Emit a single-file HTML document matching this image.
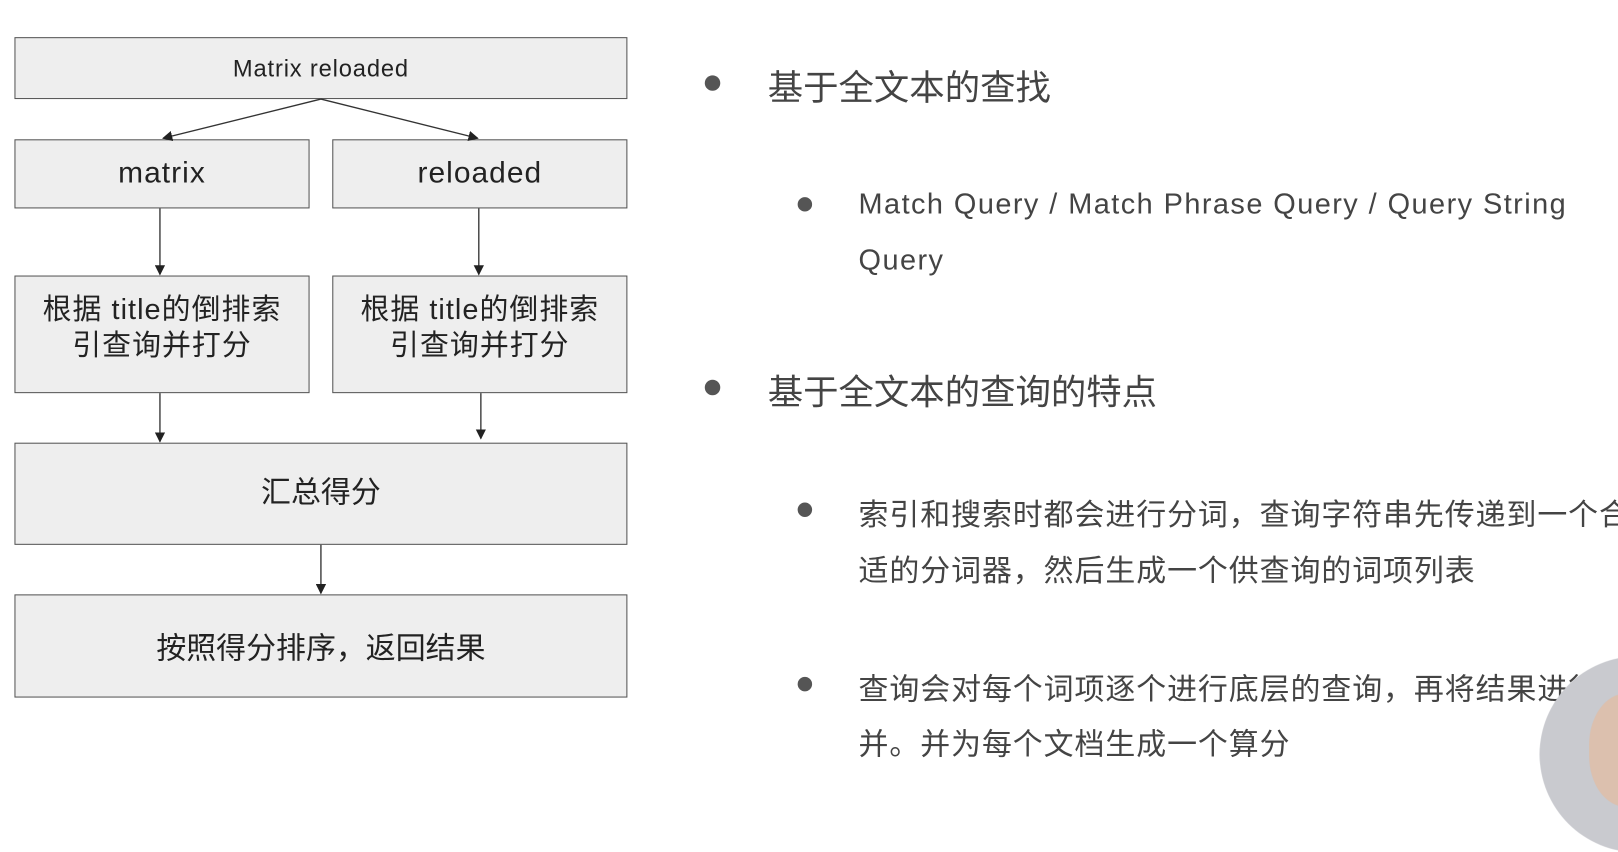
<!DOCTYPE html>
<html><head><meta charset="utf-8"><style>
body{margin:0;width:1618px;height:774px;background:#fff;position:relative;overflow:hidden;font-family:"Liberation Sans","Noto Sans CJK SC",sans-serif;color:#333}
#w{position:absolute;left:0;top:0;width:1568px;height:750px;transform:scale(1.0319);transform-origin:0 0}
.b{position:absolute;background:#eeeeee;border:1px solid #555;box-sizing:border-box;display:flex;align-items:center;justify-content:center;text-align:center;color:#222}
.t{position:absolute;white-space:nowrap;color:#444}
.d{position:absolute;border-radius:50%;background:#555}
</style></head><body><div id="w">
<div class="b" style="left:14px;top:36px;width:594px;height:60px;font-size:23px;letter-spacing:0.8px">Matrix reloaded</div>
<div class="b" style="left:14px;top:135px;width:286px;height:67px;font-size:29px;letter-spacing:1px">matrix</div>
<div class="b" style="left:322px;top:135px;width:286px;height:67px;font-size:29px;letter-spacing:1px">reloaded</div>
<div class="b" style="left:14px;top:267px;width:286px;height:114px;font-size:28px;line-height:35px;padding-bottom:14px;letter-spacing:1px">根据 title的倒排索<br>引查询并打分</div>
<div class="b" style="left:322px;top:267px;width:286px;height:114px;font-size:28px;line-height:35px;padding-bottom:14px;letter-spacing:1px">根据 title的倒排索<br>引查询并打分</div>
<div class="b" style="left:14px;top:429px;width:594px;height:99px;font-size:29px;padding-bottom:8px">汇总得分</div>
<div class="b" style="left:14px;top:576px;width:594px;height:100px;font-size:29px">按照得分排序，返回结果</div>
<svg style="position:absolute;left:0;top:0" width="620" height="700">
<defs><marker id="a" markerWidth="10" markerHeight="10" refX="9" refY="5" orient="auto" markerUnits="userSpaceOnUse"><path d="M0,0 L10,5 L0,10z" fill="#222"/></marker></defs>
<g stroke="#333" stroke-width="1.3" fill="none" marker-end="url(#a)">
<line x1="311" y1="96" x2="158" y2="134"/>
<line x1="311" y1="96" x2="463" y2="134"/>
<line x1="155" y1="202" x2="155" y2="266"/>
<line x1="464" y1="202" x2="464" y2="266"/>
<line x1="155" y1="381" x2="155" y2="428"/>
<line x1="466" y1="381" x2="466" y2="425"/>
<line x1="311" y1="528" x2="311" y2="575"/>
</g></svg>
<div class="d" style="left:683px;top:73px;width:15px;height:15px"></div>
<div class="t" style="left:744px;top:57px;font-size:34.3px">基于全文本的查找</div>
<div class="d" style="left:773px;top:191px;width:14px;height:14px"></div>
<div class="t" style="left:832px;top:182px;font-size:28px;letter-spacing:1.4px">Match Query / Match Phrase Query / Query String</div>
<div class="t" style="left:832px;top:236px;font-size:28px;letter-spacing:1.4px">Query</div>
<div class="d" style="left:683px;top:368px;width:15px;height:15px"></div>
<div class="t" style="left:744px;top:352px;font-size:34.3px">基于全文本的查询的特点</div>
<div class="d" style="left:773px;top:487px;width:14px;height:14px"></div>
<div class="t" style="left:832px;top:476px;font-size:29px;letter-spacing:0.9px">索引和搜索时都会进行分词，查询字符串先传递到一个合</div>
<div class="t" style="left:832px;top:530px;font-size:29px;letter-spacing:0.9px">适的分词器，然后生成一个供查询的词项列表</div>
<div class="d" style="left:773px;top:656px;width:14px;height:14px"></div>
<div class="t" style="left:832px;top:645px;font-size:29px;letter-spacing:0.9px">查询会对每个词项逐个进行底层的查询，再将结果进行合</div>
<div class="t" style="left:832px;top:698px;font-size:29px;letter-spacing:0.9px">并。并为每个文档生成一个算分</div>
<div style="position:absolute;left:1492px;top:636px;width:190px;height:190px;border-radius:50%;background:#c9cacf"></div>
<div style="position:absolute;left:1540px;top:672px;width:80px;height:110px;border-radius:45%;background:#dcc0ae"></div>
</div></body></html>
